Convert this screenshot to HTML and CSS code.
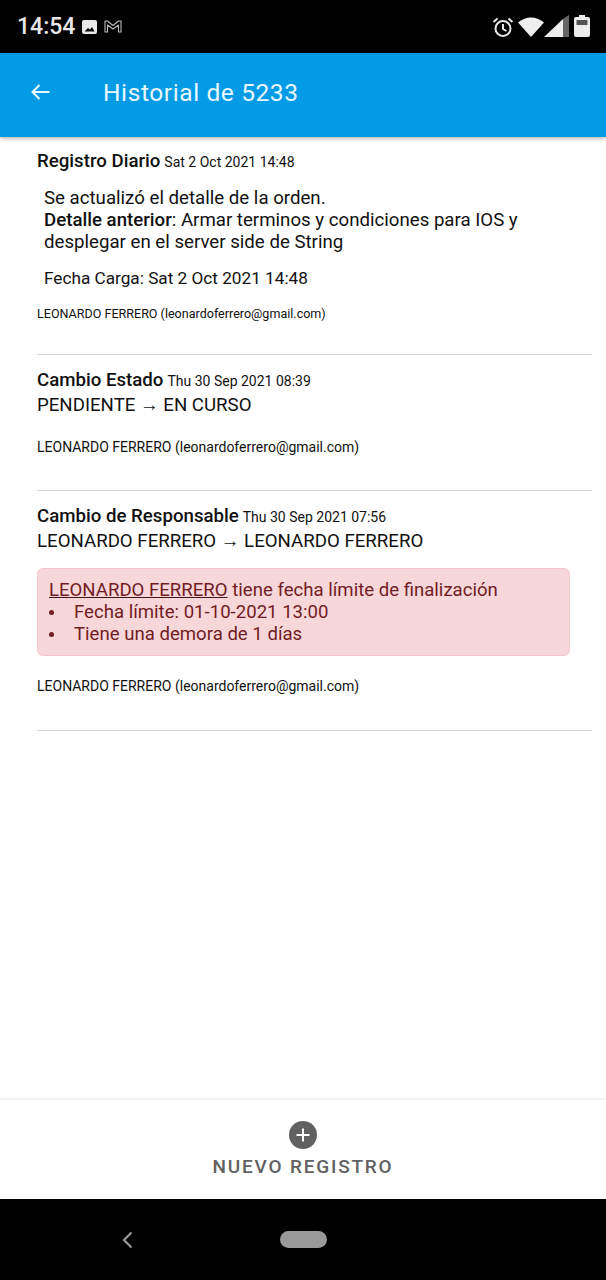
FILE: index.html
```html
<!DOCTYPE html>
<html lang="es">
<head>
    <meta charset="UTF-8">
    <title>Historial de 5233</title>
    <link rel="stylesheet" href="styles.css">
</head>
<body>
    <div class="phone">
        <div class="status-bar">
            <div class="status-left">
                <span class="clock">14:54</span>
                <svg class="ic-photo" width="15" height="14" viewBox="0 0 15 14"><path fill="#e8e8e8" fill-rule="evenodd" d="M2 0h11a2 2 0 0 1 2 2v10a2 2 0 0 1-2 2H2a2 2 0 0 1-2-2V2a2 2 0 0 1 2-2zM2.500 11.500h10L10 7 8 9.500 6 8z"/></svg>
                <svg class="ic-mail" width="18" height="13" viewBox="0 0 18 13"><path fill="none" stroke="#bbb" stroke-width="1.100" stroke-linejoin="round" d="M1 1h2.500L9 5.500 14.500 1H17v11h-2.500V5L9 9 3.500 5v7H1z"/></svg>
            </div>
            <div class="status-right">
                <svg width="22" height="22" viewBox="0 0 22 22"><g fill="none" stroke="#e8e8e8" stroke-width="2"><circle cx="11" cy="12.500" r="7.500"/><path d="M11 8v5l3.500 2"/><path d="M1.500 6l4-3.500M20.500 6l-4-3.500"/></g></svg>
                <svg class="ic-wifi" width="26" height="20" viewBox="0 0 26 20"><path fill="#eee" d="M0 5.500C3.500 2.500 8 .5 13 .5s9.500 2 13 5L13 20z"/></svg>
                <svg class="ic-signal" width="26" height="22" viewBox="0 0 26 22"><path fill="#eee" d="M0 22L19 4v18z"/><path fill="#666" d="M19 4l6-4v22h-6z"/></svg>
                <svg class="ic-battery" width="16" height="22" viewBox="0 0 16 22"><path fill="#eee" d="M5 0h6v2h3a2 2 0 0 1 2 2v16a2 2 0 0 1-2 2H2a2 2 0 0 1-2-2V4a2 2 0 0 1 2-2h3z"/><path fill="#555" d="M2.500 5h11v5h-11z"/></svg>
            </div>
        </div>

        <header class="app-bar">
            <svg class="back-arrow" width="20" height="18" viewBox="0 0 20 18"><path fill="none" stroke="#e8f7ff" stroke-width="2" d="M19.500 9H2.500M9.500 2l-7 7 7 7"/></svg>
            <h1 class="app-title">Historial de 5233</h1>
        </header>

        <main class="content">
            <section class="entry entry-first">
                <div class="entry-head"><strong class="entry-type">Registro Diario</strong> <span class="entry-date">Sat 2 Oct 2021 14:48</span></div>
                <div class="detail">
                    <p>Se actualizó el detalle de la orden.<br><strong>Detalle anterior</strong>: Armar terminos y condiciones para IOS y desplegar en el server side de String</p>
                    <p class="detail-date">Fecha Carga: Sat 2 Oct 2021 14:48</p>
                </div>
                <div class="author author-small">LEONARDO FERRERO (leonardoferrero@gmail.com)</div>
            </section>

            <section class="entry">
                <div class="entry-head"><strong class="entry-type">Cambio Estado</strong> <span class="entry-date">Thu 30 Sep 2021 08:39</span></div>
                <div class="entry-body">PENDIENTE → EN CURSO</div>
                <div class="author">LEONARDO FERRERO (leonardoferrero@gmail.com)</div>
            </section>

            <section class="entry entry-last">
                <div class="entry-head"><strong class="entry-type">Cambio de Responsable</strong> <span class="entry-date">Thu 30 Sep 2021 07:56</span></div>
                <div class="entry-body">LEONARDO FERRERO → LEONARDO FERRERO</div>
                <div class="alert">
                    <a class="alert-link" href="#">LEONARDO FERRERO</a> tiene fecha límite de finalización
                    <ul class="alert-list">
                        <li>Fecha límite: 01-10-2021 13:00</li>
                        <li>Tiene una demora de 1 días</li>
                    </ul>
                </div>
                <div class="author">LEONARDO FERRERO (leonardoferrero@gmail.com)</div>
            </section>
        </main>

        <div class="new-bar">
            <svg width="28" height="28" viewBox="0 0 28 28"><circle cx="14" cy="14" r="14" fill="#616161"/><path stroke="#fff" stroke-width="2" d="M14 7.500v13M7.500 14h13"/></svg>
            <span class="new-label">NUEVO REGISTRO</span>
        </div>

        <div class="nav-bar">
            <svg class="nav-back" width="12" height="18" viewBox="0 0 12 18"><path fill="none" stroke="#999" stroke-width="2.200" d="M10.500 1.500L3 9l7.500 7.500"/></svg>
            <span class="nav-pill"></span>
        </div>
    </div>
</body>
</html>
```

FILE: styles.css
```css
* {
    box-sizing: border-box;
}
html, body {
    margin: 0;
    padding: 0;
}
body {
    font-family: Roboto, sans-serif;
    background-color: #fff;
    color: #111;
}
.phone {
    width: 606px;
    height: 1280px;
    display: flex;
    flex-direction: column;
    overflow: hidden;
}
.status-bar {
    height: 53px;
    flex: none;
    background-color: #000;
    display: flex;
    align-items: center;
    justify-content: space-between;
    padding: 0 16px 0 17px;
}
.status-left, .status-right {
    display: flex;
    align-items: center;
}
.clock {
    color: #e8e8e8;
    font-size: 23px;
    font-weight: 500;
    margin-right: 7px;
}
.ic-mail {
    margin-left: 7px;
}
.ic-wifi {
    margin-left: 4px;
}
.ic-signal {
    margin-bottom: 2px;
}
.ic-battery {
    margin-left: 4px;
    margin-bottom: 2px;
}
.app-bar {
    height: 84px;
    flex: none;
    background-color: #039be5;
    display: flex;
    align-items: center;
    padding-left: 30px;
    padding-bottom: 6px;
    box-shadow: 0 2px 4px rgba(0, 0, 0, 0.25);
    position: relative;
}
.app-title {
    margin: 0 0 0 53px;
    font-size: 24.500px;
    font-weight: 400;
    letter-spacing: 0.6px;
    color: #e8f7ff;
}
.content {
    flex: 1;
    padding: 0 14px 0 37px;
}
.entry {
    border-bottom: 1px solid #d9d9d9;
    padding-top: 13px;
    padding-bottom: 34px;
}
.entry-first {
    padding-top: 12px;
    padding-bottom: 31px;
}
.entry-last {
    padding-bottom: 35px;
}
.entry-head {
    line-height: 24px;
}
.entry-type {
    font-size: 18.670px;
    font-weight: 500;
}
.entry-date {
    font-size: 14px;
}
.entry-body {
    font-size: 18.670px;
    line-height: 24px;
}
.detail {
    padding: 13px 0 0 7px;
    font-size: 18.670px;
    line-height: 22px;
}
.detail p {
    margin: 0;
}
.detail strong {
    font-weight: 500;
}
.detail .detail-date {
    margin-top: 14px;
    font-size: 17.200px;
}
.author {
    font-size: 14px;
    line-height: 18px;
    margin-top: 16px;
}
.author-small {
    font-size: 12.550px;
    margin-top: 16px;
}
.entry-body + .author {
    margin-top: 21px;
}
.alert {
    width: 533px;
    margin-top: 15px;
    padding: 10px 11px;
    height: 88px;
    background-color: #f8d7da;
    border: 1px solid #f5c6cb;
    border-radius: 6px;
    color: #721c24;
    font-size: 18.600px;
    line-height: 22px;
}
.alert-link {
    color: #721c24;
    text-decoration: underline;
    text-decoration-color: #491217;
}
.alert-list {
    margin: 0;
    padding: 0;
    list-style: none;
}
.alert-list li {
    display: flex;
}
.alert-list li::before {
    content: "";
    width: 5px;
    height: 5px;
    border-radius: 50%;
    background-color: #721c24;
    flex: none;
    margin: 9px 20px 0 0;
}
.alert + .author {
    margin-top: 21px;
}
.new-bar {
    height: 101px;
    flex: none;
    border-top: 2px solid #f2f2f2;
    display: flex;
    flex-direction: column;
    align-items: center;
    padding-top: 21px;
    color: #616161;
}
.new-label {
    margin-top: 6px;
    font-size: 19px;
    font-weight: 500;
    letter-spacing: 1.800px;
}
.nav-bar {
    height: 81px;
    flex: none;
    background-color: #000;
    display: flex;
    align-items: center;
    padding-left: 121px;
}
.nav-pill {
    width: 47px;
    height: 17px;
    border-radius: 9px;
    background-color: #999;
    margin-left: 147px;
}
```
